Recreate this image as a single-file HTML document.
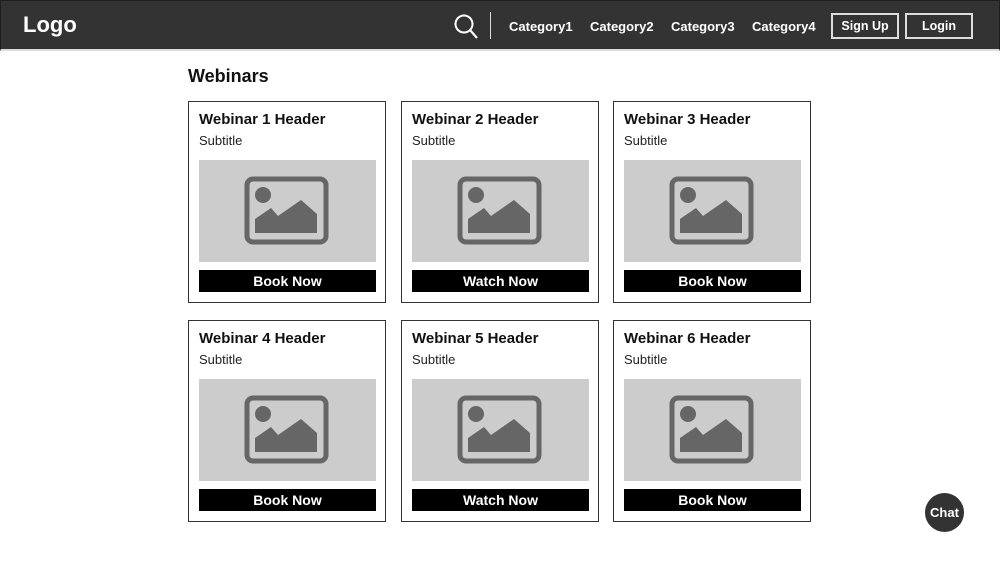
<!DOCTYPE html>
<html><head><style>
*{margin:0;padding:0;box-sizing:border-box}
body{width:1000px;height:563px;background:#fff;font-family:"Liberation Sans",sans-serif;position:relative;overflow:hidden}
.hdr{position:absolute;left:0;top:0;width:1000px;height:51px;background:#333;border:1px solid #1e1e1e;border-bottom:2px solid #ddd}
.logo{position:absolute;left:22px;top:11px;color:#fff;font-size:22px;font-weight:bold}
.cat{position:absolute;top:18px;color:#fff;font-size:13px;font-weight:bold}
.btn{position:absolute;top:12px;height:26px;border:2px solid #ddd;color:#fff;font-size:12.5px;font-weight:bold;text-align:center;line-height:22px}
h1{position:absolute;left:188px;top:66px;font-size:18px;font-weight:bold;color:#111}
.card{position:absolute;width:198px;height:202px;border:1px solid #333;background:#fff}
.card .t{position:absolute;left:10px;top:9px;font-size:15px;font-weight:bold;color:#111}
.card .s{position:absolute;left:10px;top:31px;font-size:13px;color:#222}
.card .im{position:absolute;left:10px;top:58px;width:177px;height:102px;background:#ccc}
.card .im svg{position:absolute;left:45px;top:16px}
.card .b{position:absolute;left:10px;top:168px;width:177px;height:22px;background:#000;color:#fff;font-size:14px;font-weight:bold;text-align:center;line-height:22px}
.chat{position:absolute;left:925px;top:493px;width:39px;height:39px;border-radius:50%;background:#333;color:#fff;font-size:13px;font-weight:bold;text-align:center;line-height:39px}
</style></head><body>
<div class="hdr">
<div class="logo">Logo</div>
<svg style="position:absolute;left:452px;top:12px" width="28" height="28" viewBox="0 0 28 28"><circle cx="11" cy="11" r="8.5" fill="none" stroke="#fff" stroke-width="2"/><line x1="17" y1="17" x2="24" y2="25" stroke="#fff" stroke-width="2.2"/></svg>
<div style="position:absolute;left:489px;top:11px;width:1px;height:27px;background:#ddd"></div>
<div class="cat" style="left:508px">Category1</div>
<div class="cat" style="left:589px">Category2</div>
<div class="cat" style="left:670px">Category3</div>
<div class="cat" style="left:751px">Category4</div>
<div class="btn" style="left:830px;width:68px">Sign Up</div>
<div class="btn" style="left:904px;width:68px">Login</div>
</div>
<h1>Webinars</h1>
<div class="card" style="left:188px;top:101px"><div class="t">Webinar 1 Header</div><div class="s">Subtitle</div><div class="im"><svg width="86" height="70" viewBox="0 0 86 70"><rect x="3" y="3" width="79" height="63" rx="6" fill="none" stroke="#666" stroke-width="5"/><circle cx="19" cy="19" r="8" fill="#666"/><path d="M11 57V43L27 32L34 40L57 24L73 38V57Z" fill="#666"/></svg></div><div class="b">Book Now</div></div>
<div class="card" style="left:401px;top:101px"><div class="t">Webinar 2 Header</div><div class="s">Subtitle</div><div class="im"><svg width="86" height="70" viewBox="0 0 86 70"><rect x="3" y="3" width="79" height="63" rx="6" fill="none" stroke="#666" stroke-width="5"/><circle cx="19" cy="19" r="8" fill="#666"/><path d="M11 57V43L27 32L34 40L57 24L73 38V57Z" fill="#666"/></svg></div><div class="b">Watch Now</div></div>
<div class="card" style="left:613px;top:101px"><div class="t">Webinar 3 Header</div><div class="s">Subtitle</div><div class="im"><svg width="86" height="70" viewBox="0 0 86 70"><rect x="3" y="3" width="79" height="63" rx="6" fill="none" stroke="#666" stroke-width="5"/><circle cx="19" cy="19" r="8" fill="#666"/><path d="M11 57V43L27 32L34 40L57 24L73 38V57Z" fill="#666"/></svg></div><div class="b">Book Now</div></div>
<div class="card" style="left:188px;top:320px"><div class="t">Webinar 4 Header</div><div class="s">Subtitle</div><div class="im"><svg width="86" height="70" viewBox="0 0 86 70"><rect x="3" y="3" width="79" height="63" rx="6" fill="none" stroke="#666" stroke-width="5"/><circle cx="19" cy="19" r="8" fill="#666"/><path d="M11 57V43L27 32L34 40L57 24L73 38V57Z" fill="#666"/></svg></div><div class="b">Book Now</div></div>
<div class="card" style="left:401px;top:320px"><div class="t">Webinar 5 Header</div><div class="s">Subtitle</div><div class="im"><svg width="86" height="70" viewBox="0 0 86 70"><rect x="3" y="3" width="79" height="63" rx="6" fill="none" stroke="#666" stroke-width="5"/><circle cx="19" cy="19" r="8" fill="#666"/><path d="M11 57V43L27 32L34 40L57 24L73 38V57Z" fill="#666"/></svg></div><div class="b">Watch Now</div></div>
<div class="card" style="left:613px;top:320px"><div class="t">Webinar 6 Header</div><div class="s">Subtitle</div><div class="im"><svg width="86" height="70" viewBox="0 0 86 70"><rect x="3" y="3" width="79" height="63" rx="6" fill="none" stroke="#666" stroke-width="5"/><circle cx="19" cy="19" r="8" fill="#666"/><path d="M11 57V43L27 32L34 40L57 24L73 38V57Z" fill="#666"/></svg></div><div class="b">Book Now</div></div>
<div class="chat">Chat</div>
</body></html>
